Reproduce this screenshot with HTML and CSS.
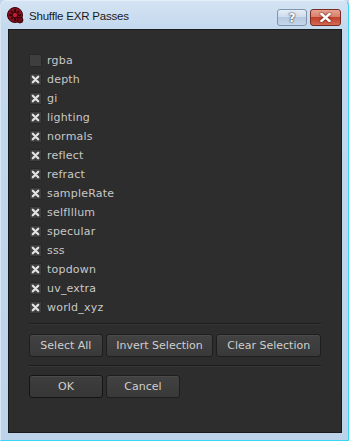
FILE: index.html
```html
<!DOCTYPE html>
<html>
<head>
<meta charset="utf-8">
<link rel="stylesheet" href="styles.css">
</head>
<body>
<div class="window">
  <div class="titlebar">
    <svg class="app-icon" width="17" height="17" viewBox="0 0 17 17">
      <circle cx="8" cy="8" r="7.5" fill="#8a1020"/>
      <circle cx="8" cy="8" r="7.5" fill="none" stroke="#3a0008" stroke-width="1"/>
      <path d="M4 4 L12 12 M12 4 L4 12 M8 2 L8 14 M2 8 L14 8" stroke="#2a0006" stroke-width="1.6"/>
      <circle cx="8" cy="8" r="2.2" fill="#c02030"/>
      <circle cx="13" cy="13" r="3" fill="#6a0a14" stroke="#2a0006" stroke-width="0.8"/>
    </svg>
    <span class="title">Shuffle EXR Passes</span>
    <div class="caption-btns">
      <div class="cbtn help">?</div>
      <div class="cbtn close">
        <svg width="11" height="9" viewBox="0 0 11 9"><path d="M1.5 1 L9.5 8 M9.5 1 L1.5 8" stroke="#fff" stroke-width="2.4" stroke-linecap="square"/></svg>
      </div>
    </div>
  </div>
  <div class="client">
    <div class="list">
      <div class="row"><span class="box"></span><span class="lbl">rgba</span></div>
      <div class="row"><span class="box on"><svg width="9" height="9" viewBox="0 0 9 9"><path d="M1.8 1.8 L7.2 7.2 M7.2 1.8 L1.8 7.2" stroke="#e2e2e2" stroke-width="2.3" stroke-linecap="round"/></svg></span><span class="lbl">depth</span></div>
      <div class="row"><span class="box on"><svg width="9" height="9" viewBox="0 0 9 9"><path d="M1.8 1.8 L7.2 7.2 M7.2 1.8 L1.8 7.2" stroke="#e2e2e2" stroke-width="2.3" stroke-linecap="round"/></svg></span><span class="lbl">gi</span></div>
      <div class="row"><span class="box on"><svg width="9" height="9" viewBox="0 0 9 9"><path d="M1.8 1.8 L7.2 7.2 M7.2 1.8 L1.8 7.2" stroke="#e2e2e2" stroke-width="2.3" stroke-linecap="round"/></svg></span><span class="lbl">lighting</span></div>
      <div class="row"><span class="box on"><svg width="9" height="9" viewBox="0 0 9 9"><path d="M1.8 1.8 L7.2 7.2 M7.2 1.8 L1.8 7.2" stroke="#e2e2e2" stroke-width="2.3" stroke-linecap="round"/></svg></span><span class="lbl">normals</span></div>
      <div class="row"><span class="box on"><svg width="9" height="9" viewBox="0 0 9 9"><path d="M1.8 1.8 L7.2 7.2 M7.2 1.8 L1.8 7.2" stroke="#e2e2e2" stroke-width="2.3" stroke-linecap="round"/></svg></span><span class="lbl">reflect</span></div>
      <div class="row"><span class="box on"><svg width="9" height="9" viewBox="0 0 9 9"><path d="M1.8 1.8 L7.2 7.2 M7.2 1.8 L1.8 7.2" stroke="#e2e2e2" stroke-width="2.3" stroke-linecap="round"/></svg></span><span class="lbl">refract</span></div>
      <div class="row"><span class="box on"><svg width="9" height="9" viewBox="0 0 9 9"><path d="M1.8 1.8 L7.2 7.2 M7.2 1.8 L1.8 7.2" stroke="#e2e2e2" stroke-width="2.3" stroke-linecap="round"/></svg></span><span class="lbl">sampleRate</span></div>
      <div class="row"><span class="box on"><svg width="9" height="9" viewBox="0 0 9 9"><path d="M1.8 1.8 L7.2 7.2 M7.2 1.8 L1.8 7.2" stroke="#e2e2e2" stroke-width="2.3" stroke-linecap="round"/></svg></span><span class="lbl">selfIllum</span></div>
      <div class="row"><span class="box on"><svg width="9" height="9" viewBox="0 0 9 9"><path d="M1.8 1.8 L7.2 7.2 M7.2 1.8 L1.8 7.2" stroke="#e2e2e2" stroke-width="2.3" stroke-linecap="round"/></svg></span><span class="lbl">specular</span></div>
      <div class="row"><span class="box on"><svg width="9" height="9" viewBox="0 0 9 9"><path d="M1.8 1.8 L7.2 7.2 M7.2 1.8 L1.8 7.2" stroke="#e2e2e2" stroke-width="2.3" stroke-linecap="round"/></svg></span><span class="lbl">sss</span></div>
      <div class="row"><span class="box on"><svg width="9" height="9" viewBox="0 0 9 9"><path d="M1.8 1.8 L7.2 7.2 M7.2 1.8 L1.8 7.2" stroke="#e2e2e2" stroke-width="2.3" stroke-linecap="round"/></svg></span><span class="lbl">topdown</span></div>
      <div class="row"><span class="box on"><svg width="9" height="9" viewBox="0 0 9 9"><path d="M1.8 1.8 L7.2 7.2 M7.2 1.8 L1.8 7.2" stroke="#e2e2e2" stroke-width="2.3" stroke-linecap="round"/></svg></span><span class="lbl">uv_extra</span></div>
      <div class="row"><span class="box on"><svg width="9" height="9" viewBox="0 0 9 9"><path d="M1.8 1.8 L7.2 7.2 M7.2 1.8 L1.8 7.2" stroke="#e2e2e2" stroke-width="2.3" stroke-linecap="round"/></svg></span><span class="lbl">world_xyz</span></div>
    </div>
    <div class="sep sep1"></div>
    <div class="btnrow r1">
      <div class="btn w74">Select All</div>
      <div class="btn w108">Invert Selection</div>
      <div class="btn w105">Clear Selection</div>
    </div>
    <div class="sep sep2"></div>
    <div class="btnrow r2">
      <div class="btn w74 focus">OK</div>
      <div class="btn w74">Cancel</div>
    </div>
  </div>
</div>
</body>
</html>
```

FILE: styles.css
```css
html, body {
  margin: 0;
  padding: 0;
  background: #bfd5eb;
}
.window {
  box-sizing: border-box;
  width: 349px;
  height: 441px;
  background: linear-gradient(to bottom, #d3e3f3 0px, #c3d8ee 30px, #bcd3ea 100%);
  border-right: 1px solid #39d6f3;
  border-bottom: 1px solid #39d6f3;
  border-left: 1px solid #d8e6f4;
  border-top: 1px solid #e4eef8;
  border-radius: 6px 6px 0 0;
  display: flex;
  flex-direction: column;
}
.titlebar {
  height: 28px;
  display: flex;
  align-items: center;
  padding-left: 6px;
  position: relative;
}
.app-icon {
  margin-top: 1px;
}
.title {
  font-family: "Liberation Sans", Arial, sans-serif;
  font-size: 11.5px;
  color: #1a1a1a;
  margin-left: 5px;
  margin-top: 2px;
  letter-spacing: -0.2px;
}
.caption-btns {
  position: absolute;
  right: 7px;
  top: 8px;
  display: flex;
  gap: 3px;
}
.cbtn {
  box-sizing: border-box;
  width: 31px;
  height: 17px;
  border-radius: 3px;
  display: flex;
  align-items: center;
  justify-content: center;
}
.help {
  width: 30px;
  border: 1px solid #8094ab;
  background: linear-gradient(to bottom, #e4edf7 0%, #cfdcec 45%, #b5c9df 50%, #c4d6ea 100%);
  color: #fff;
  font-family: "DejaVu Sans", sans-serif;
  font-weight: bold;
  font-size: 12px;
  text-shadow: 0 0 2px #334, 0 0 1px #223;
}
.close {
  border: 1px solid #7b2a22;
  background: linear-gradient(to bottom, #e8a391 0%, #d7806c 45%, #c2402c 50%, #d26a52 100%);
}
.close svg {
  filter: drop-shadow(0 0 1px #5a1008);
}
.client {
  box-sizing: border-box;
  margin: 0 6px 7px 7px;
  height: 404px;
  background: #2d2d2d;
  border: 1px solid #1b1b1b;
  padding: 21px 20px 0 20px;
}
.list {
  display: flex;
  flex-direction: column;
}
.row {
  height: 19px;
  display: flex;
  align-items: center;
}
.box {
  box-sizing: border-box;
  width: 13px;
  height: 13px;
  background: #3e3e3e;
  border: 1px solid #272727;
  border-radius: 1px;
  display: flex;
  align-items: center;
  justify-content: center;
}
.lbl {
  margin-left: 5px;
  font-family: "DejaVu Sans", Verdana, sans-serif;
  font-size: 11px;
  color: #c8c8c8;
  letter-spacing: 0.2px;
}
.sep {
  height: 1px;
  background: #1c1c1c;
  border-bottom: 1px solid #353535;
}
.sep1 { margin-top: 6px; }
.btnrow {
  display: flex;
  gap: 3px;
}
.r1 { margin-top: 9px; }
.sep2 { margin-top: 8px; }
.r2 { margin-top: 8px; }
.btn {
  box-sizing: border-box;
  height: 23px;
  border: 1px solid #1e1e1e;
  border-radius: 3px;
  background: linear-gradient(to bottom, #424242, #393939);
  box-shadow: inset 0 1px 0 #4a4a4a;
  display: flex;
  align-items: center;
  justify-content: center;
  font-family: "DejaVu Sans", Verdana, sans-serif;
  font-size: 11px;
  color: #cfcfcf;
}
.focus {
  border-color: #151515;
  background: linear-gradient(to bottom, #3e3e3e, #363636);
}
.w74 { width: 74px; }
.w108 { width: 108px; }
.w105 { width: 105px; }
```
